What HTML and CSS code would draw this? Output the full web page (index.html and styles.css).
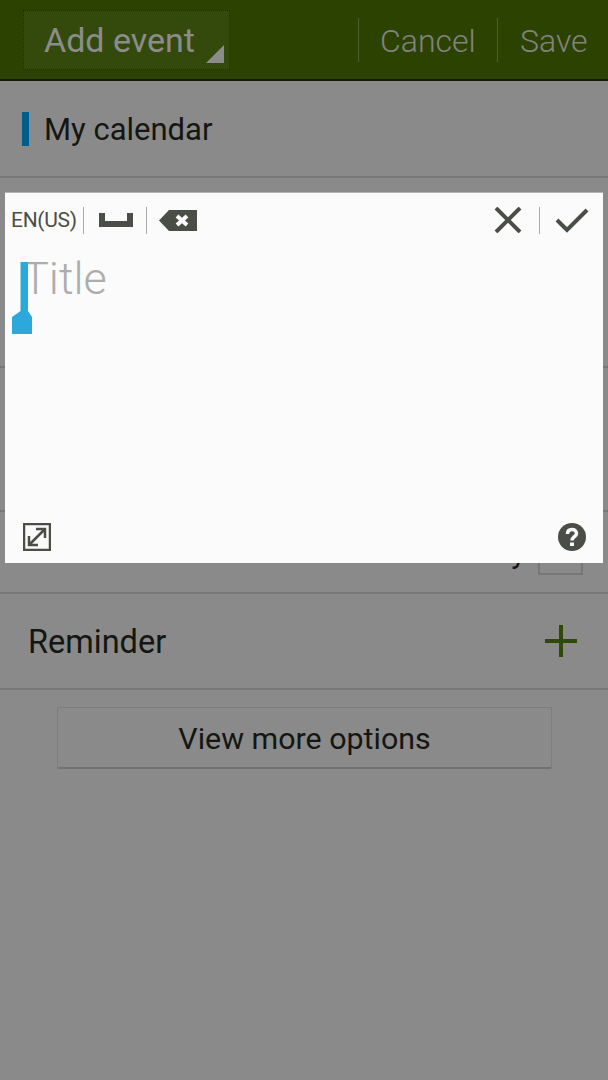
FILE: index.html
```html
<!DOCTYPE html>
<html lang="en">
<head>
    <meta charset="UTF-8">
    <title>Add event</title>
    <link rel="stylesheet" href="styles.css">
</head>
<body>
    <!-- ACTION BAR -->
    <div class="action-bar">
        <div class="bar-title">
            <span>Add event</span>
            <svg class="bar-corner" width="18" height="18" viewBox="0 0 18 18"><path d="M18 0V18H0Z"/></svg>
        </div>
        <div class="bar-actions">
            <div class="bar-action action-cancel">Cancel</div>
            <div class="bar-action action-save">Save</div>
        </div>
    </div>

    <!-- FORM ROWS (dimmed behind the panel) -->
    <div class="row row-calendar">
        <span class="calendar-mark"></span>
        <span class="row-text">My calendar</span>
    </div>
    <div class="row row-title"></div>
    <div class="row row-dates"></div>
    <div class="row row-allday">
        <span>All day</span>
        <span class="checkbox"></span>
    </div>
    <div class="row row-reminder">
        <span class="row-text">Reminder</span>
        <svg width="34" height="32" viewBox="0 0 34 32"><path class="plus" d="M0 16H32M16 0V32"/></svg>
    </div>
    <div class="more-wrap">
        <div class="more-button">View more options</div>
    </div>

    <!-- HANDWRITING PANEL -->
    <div class="panel">
        <div class="panel-toolbar">
            <div class="tool-group">
                <span class="lang">EN(US)</span>
                <span class="tool-sep"></span>
                <svg class="icon-space" width="34" height="14" viewBox="0 0 34 14"><path d="M0 0H6V8H28V0H34V14H0Z"/></svg>
                <span class="tool-sep tool-sep-mid"></span>
                <svg class="icon-back" width="38" height="21" viewBox="0 0 38 21">
                    <path d="M0 10.5 10 0H38V21H10Z"/>
                    <path class="back-x" d="M18 6 28 15M28 6 18 15"/>
                </svg>
            </div>
            <div class="tool-group">
                <svg class="icon-line" width="28" height="26" viewBox="0 0 28 26"><path d="M2 1 26 25M26 1 2 25"/></svg>
                <span class="tool-sep tool-sep-right"></span>
                <svg class="icon-line" width="34" height="26" viewBox="0 0 34 26"><path d="M2 13 12 23 32 3"/></svg>
            </div>
        </div>
        <div class="panel-input">
            <span class="placeholder">Title</span>
            <svg class="cursor" width="20" height="72" viewBox="0 0 20 72"><path d="M8.500 0H16V49L20 55V72H0V55L8.500 49Z"/></svg>
        </div>
        <div class="panel-footer">
            <svg class="icon-expand" width="28" height="28" viewBox="0 0 28 28">
                <path d="M1 1H27V27H1Z"/>
                <path d="M7 21 21 7M13 6H22V15M6 13V22H15"/>
            </svg>
            <svg width="28" height="28" viewBox="0 0 28 28">
                <circle class="help-disc" cx="14" cy="14" r="14"/>
                <path class="help-mark" d="M9.5 11C9.5 8 11.5 6.5 14 6.5S18.500 8 18.500 10.500C18.500 13.500 14 14 14 17.500"/>
                <rect class="help-dot" x="12" y="19.500" width="4" height="3.500"/>
            </svg>
        </div>
    </div>
</body>
</html>
```
FILE: styles.css
```css
:root {
    --dim-bg: #8a8a8a;
    --row-line: #787878;
    --dark-icon: #4b4e46;
}

body {
    margin: 0;
    height: 1080px;
    overflow: hidden;
    position: relative;
    font-family: Roboto, sans-serif;
    background-color: var(--dim-bg);
    color: #141612;
}

/* ACTION BAR */
.action-bar {
    height: 79px;
    background: #2b4200;
    border-bottom: 2px solid #141a08;
    display: flex;
    justify-content: space-between;
    align-items: center;
}

.bar-title {
    position: relative;
    margin-left: 23px;
    width: 207px;
    height: 60px;
    margin-top: 1px;
    box-sizing: border-box;
    border: 1px dotted #1d2d00;
    background: #344a0d;
    color: #8c8c8c;
    font-size: 34px;
    line-height: 58px;
    padding-left: 20px;
}

.bar-corner {
    position: absolute;
    right: 5px;
    bottom: 6px;
    fill: #8c8c8c;
}

.bar-actions {
    display: flex;
    height: 44px;
    margin-top: 1px;
}

.bar-action {
    border-left: 1px solid #4d5f2c;
    color: #82837f;
    font-size: 32px;
    font-weight: 300;
    line-height: 42px;
    padding-top: 2px;
    box-sizing: border-box;
}

.action-cancel {
    width: 139px;
    padding-left: 21px;
}

.action-save {
    width: 111px;
    padding-left: 22px;
}

/* FORM ROWS */
.row {
    border-bottom: 2px solid var(--row-line);
    box-sizing: border-box;
    display: flex;
    align-items: center;
    font-size: 31px;
}

.row-text {
    padding-top: 2px;
}

.row-calendar {
    height: 97px;
    padding-left: 22px;
    gap: 15px;
}

.calendar-mark {
    width: 7px;
    height: 34px;
    background: #005f8a;
}

.row-title { height: 190px; }
.row-dates { height: 144px; }

.row-allday {
    height: 82px;
    justify-content: flex-end;
    padding-right: 25px;
    gap: 12px;
}

.checkbox {
    width: 45px;
    height: 45px;
    box-sizing: border-box;
    border: 2px solid #777;
}

.row-reminder {
    height: 96px;
    padding: 0 29px 0 28px;
    justify-content: space-between;
    font-size: 32.500px;
}

.plus {
    fill: none;
    stroke: #2f4a08;
    stroke-width: 4;
}

.more-wrap {
    padding: 17px 56px 0 57px;
}

.more-button {
    height: 62px;
    box-sizing: border-box;
    border: 1px solid #7d7d7d;
    border-bottom: 2px solid #727272;
    border-radius: 2px;
    font-size: 30.400px;
    line-height: 61px;
    text-align: center;
}

/* HANDWRITING PANEL */
.panel {
    position: absolute;
    left: 5px;
    top: 193px;
    width: 598px;
    height: 370px;
    background: #fbfbfb;
    box-shadow: 0 -1px 0 #b4b4b4;
    display: flex;
    flex-direction: column;
    justify-content: space-between;
}

.panel-toolbar {
    display: flex;
    justify-content: space-between;
    align-items: center;
    height: 54px;
    padding: 0 14px 0 6px;
}

.tool-group {
    display: flex;
    align-items: center;
}

.lang {
    font-size: 21px;
    color: #4b4e46;
    letter-spacing: -0.3px;
}

.tool-sep {
    width: 1px;
    height: 27px;
    background: #a9a9a9;
    margin: 0 15px 0 6px;
}

.tool-sep-mid { margin: 0 12px 0 13px; }
.tool-sep-right { margin: 0 15px 0 17px; }

.icon-space { fill: var(--dark-icon); }
.icon-back { fill: var(--dark-icon); }

.back-x {
    fill: none;
    stroke: #fbfbfb;
    stroke-width: 4;
}

.icon-line {
    fill: none;
    stroke: var(--dark-icon);
    stroke-width: 4;
}

.panel-input {
    position: relative;
    flex: 1;
    padding-left: 17px;
}

.placeholder {
    font-size: 45px;
    font-weight: 300;
    color: #adadad;
    line-height: 64px;
}

.cursor {
    position: absolute;
    left: 7px;
    top: 15px;
    fill: #2ba9dc;
}

.panel-footer {
    display: flex;
    justify-content: space-between;
    align-items: center;
    height: 52px;
    padding: 0 17px 0 18px;
}

.icon-expand {
    fill: none;
    stroke: var(--dark-icon);
    stroke-width: 2.500;
}

.help-disc { fill: var(--dark-icon); }

.help-mark {
    fill: none;
    stroke: #fbfbfb;
    stroke-width: 3.500;
}

.help-dot { fill: #fbfbfb; }
```
